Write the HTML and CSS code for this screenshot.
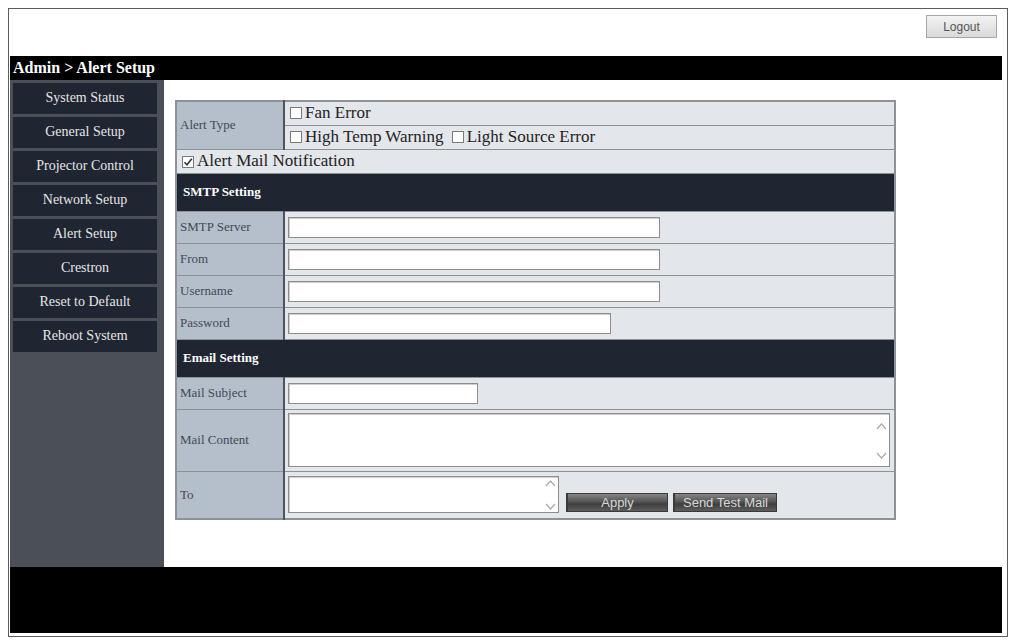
FILE: index.html
```html
<!DOCTYPE html>
<html lang="en">
  <head>
    <meta charset="UTF-8" />
    <meta name="viewport" content="width=device-width, initial-scale=1.0" />
    <title>Alert Setup</title>
    <link rel="stylesheet" href="styles.css">
  </head>
  <body>
    <div class="frame">
      <div class="topbar">
        <button class="logout">Logout</button>
      </div>
      <div class="crumb">Admin &gt; Alert Setup</div>
      <div class="layout">
        <nav class="menu">
          <a class="menu-item" href="#">System Status</a>
          <a class="menu-item" href="#">General Setup</a>
          <a class="menu-item" href="#">Projector Control</a>
          <a class="menu-item" href="#">Network Setup</a>
          <a class="menu-item" href="#">Alert Setup</a>
          <a class="menu-item" href="#">Crestron</a>
          <a class="menu-item" href="#">Reset to Default</a>
          <a class="menu-item" href="#">Reboot System</a>
        </nav>
        <div class="main">
          <table class="setup">
            <colgroup>
              <col class="col-label" />
              <col />
            </colgroup>
            <tr class="check-row">
              <td class="label" rowspan="2">Alert Type</td>
              <td class="value dashed">
                <label class="check"><span class="box"></span>Fan Error</label>
              </td>
            </tr>
            <tr class="check-row">
              <td class="value">
                <label class="check"><span class="box"></span>High Temp Warning</label>
                <label class="check check-next"><span class="box"></span>Light Source Error</label>
              </td>
            </tr>
            <tr class="check-row">
              <td class="value mail-cell" colspan="2">
                <label class="check">
                  <span class="box">
                    <svg width="10" height="10" viewBox="0 0 10 10"><path d="M1.5 5.2 L4 7.8 L8.8 1.8" fill="none" stroke="#333" stroke-width="1.6" /></svg>
                  </span>Alert Mail Notification
                </label>
              </td>
            </tr>
            <tr class="section">
              <td colspan="2">SMTP Setting</td>
            </tr>
            <tr class="field-row">
              <td class="label">SMTP Server</td>
              <td class="value"><input class="field field-long" type="text" /></td>
            </tr>
            <tr class="field-row">
              <td class="label">From</td>
              <td class="value"><input class="field field-long" type="text" /></td>
            </tr>
            <tr class="field-row">
              <td class="label">Username</td>
              <td class="value"><input class="field field-long" type="text" /></td>
            </tr>
            <tr class="field-row">
              <td class="label">Password</td>
              <td class="value"><input class="field field-mid" type="password" /></td>
            </tr>
            <tr class="section">
              <td colspan="2">Email Setting</td>
            </tr>
            <tr class="field-row">
              <td class="label">Mail Subject</td>
              <td class="value"><input class="field field-short" type="text" /></td>
            </tr>
            <tr class="content-row">
              <td class="label">Mail Content</td>
              <td class="value">
                <div class="textbox textbox-wide">
                  <textarea></textarea>
                  <div class="arrows">
                    <svg width="11" height="7" viewBox="0 0 11 7"><path d="M1 6 L5.5 1 L10 6" fill="none" stroke="#a9a9a9" stroke-width="1.2" /></svg>
                    <svg width="11" height="7" viewBox="0 0 11 7"><path d="M1 1 L5.5 6 L10 1" fill="none" stroke="#a9a9a9" stroke-width="1.2" /></svg>
                  </div>
                </div>
              </td>
            </tr>
            <tr class="to-row">
              <td class="label">To</td>
              <td class="value">
                <div class="to-line">
                  <div class="textbox textbox-small">
                    <textarea></textarea>
                    <div class="arrows arrows-small">
                      <svg width="11" height="7" viewBox="0 0 11 7"><path d="M1 6 L5.5 1 L10 6" fill="none" stroke="#a9a9a9" stroke-width="1.2" /></svg>
                      <svg width="11" height="7" viewBox="0 0 11 7"><path d="M1 1 L5.5 6 L10 1" fill="none" stroke="#a9a9a9" stroke-width="1.2" /></svg>
                    </div>
                  </div>
                  <button class="btn btn-apply">Apply</button>
                  <button class="btn btn-test">Send Test Mail</button>
                </div>
              </td>
            </tr>
          </table>
        </div>
      </div>
      <div class="footer"></div>
    </div>
  </body>
</html>
```

FILE: styles.css
```css
* {
  margin: 0;
  padding: 0;
  box-sizing: border-box;
}
body {
  margin: 8px 4px 0 8px;
  background-color: #fff;
  font-family: "Liberation Serif", "Times New Roman", serif;
}
.frame {
  border: 1px solid #5c5c5c;
  padding: 0 5px 3px 1px;
}
.topbar {
  height: 47px;
  display: flex;
  justify-content: flex-end;
  align-items: flex-start;
  padding: 6px 5px 0 0;
}
.logout {
  width: 71px;
  height: 23px;
  font: 12px "Liberation Sans", Arial, sans-serif;
  color: #555;
  background: linear-gradient(#f3f3f3, #dadada);
  border: 1px solid #a6a6a6;
}
.crumb {
  height: 24px;
  background-color: #000;
  color: #fff;
  font-weight: bold;
  font-size: 16px;
  line-height: 24px;
  padding-left: 3px;
}
.layout {
  display: flex;
  height: 487px;
}
.menu {
  width: 154px;
  background-color: #4b4f57;
  padding: 3px 7px 0 3px;
  display: flex;
  flex-direction: column;
  gap: 3px;
}
.menu-item {
  height: 31px;
  background-color: #1f2531;
  color: #e6e6e6;
  font-size: 14px;
  text-align: center;
  line-height: 29px;
  text-decoration: none;
}
.main {
  flex: 1;
  padding: 20px 0 0 11px;
}
.footer {
  height: 66px;
  background-color: #000;
}

/* settings table */
.setup {
  width: 721px;
  border-collapse: collapse;
  table-layout: fixed;
  border: 2px solid #8e9297;
}
.col-label {
  width: 108px;
}
.setup td {
  border: 1px solid #8e9297;
}
.setup td.label {
  background-color: #b5bfcc;
  color: #434953;
  font-size: 13px;
  padding-left: 3px;
  border-right: 2px solid #4f535a;
}
.value {
  background-color: #e3e6ea;
  padding-left: 3px;
}
.setup td.dashed {
  border-bottom: 1px dashed #9b9ea3;
}
.check-row td {
  height: 24px;
  font-family: "Liberation Serif", "Times New Roman", serif;
  font-size: 17px;
  color: #222;
}
.check-row td.value {
  padding-left: 5px;
}
.setup td.mail-cell {
  padding-left: 5px;
  border-top: 1px solid #5d6167;
}
.check {
  white-space: nowrap;
}
.check-next {
  margin-left: 4px;
}
.box {
  display: inline-flex;
  align-items: center;
  justify-content: center;
  width: 12px;
  height: 12px;
  border: 1px solid #7b7b7b;
  background-color: #fff;
  vertical-align: -1px;
  margin-right: 3px;
}
.section td {
  height: 38px;
  background-color: #1f2632;
  color: #fff;
  font-weight: bold;
  font-size: 13px;
  padding-left: 6px;
}
.field-row td {
  height: 32px;
}
.content-row td {
  height: 62px;
}
.setup .to-row td {
  height: 48px;
  border-top: 1px dashed #8e9297;
}
.field {
  display: block;
  height: 21px;
  border: 1px solid #8d8d8d;
  box-shadow: inset 1px 1px 0 #cfcfcf;
  background-color: #fff;
}
.field-long {
  width: 372px;
}
.field-mid {
  width: 323px;
}
.field-short {
  width: 190px;
}
.textbox {
  display: flex;
  border: 1px solid #8d8d8d;
  box-shadow: inset 1px 1px 0 #cfcfcf;
  background-color: #fff;
}
.textbox textarea {
  flex: 1;
  border: 0;
  resize: none;
  background: transparent;
}
.textbox-wide {
  width: 602px;
  height: 54px;
}
.textbox-small {
  width: 271px;
  height: 37px;
}
.arrows {
  width: 16px;
  display: flex;
  flex-direction: column;
  justify-content: space-between;
  align-items: center;
  padding: 9px 0 7px;
}
.arrows-small {
  padding: 3px 0 2px;
}
.to-line {
  display: flex;
  align-items: flex-end;
}
.btn {
  height: 19px;
  margin-bottom: 1px;
  font: 13px "Liberation Sans", Arial, sans-serif;
  color: #d8d8d8;
  background: linear-gradient(#858585, #555 45%, #3e3e3e 60%, #5e5e5e);
  border: 1px solid #3a3a3a;
  border-left-width: 2px;
}
.btn-apply {
  width: 102px;
  margin-left: 7px;
}
.btn-test {
  width: 104px;
  margin-left: 5px;
}
```
